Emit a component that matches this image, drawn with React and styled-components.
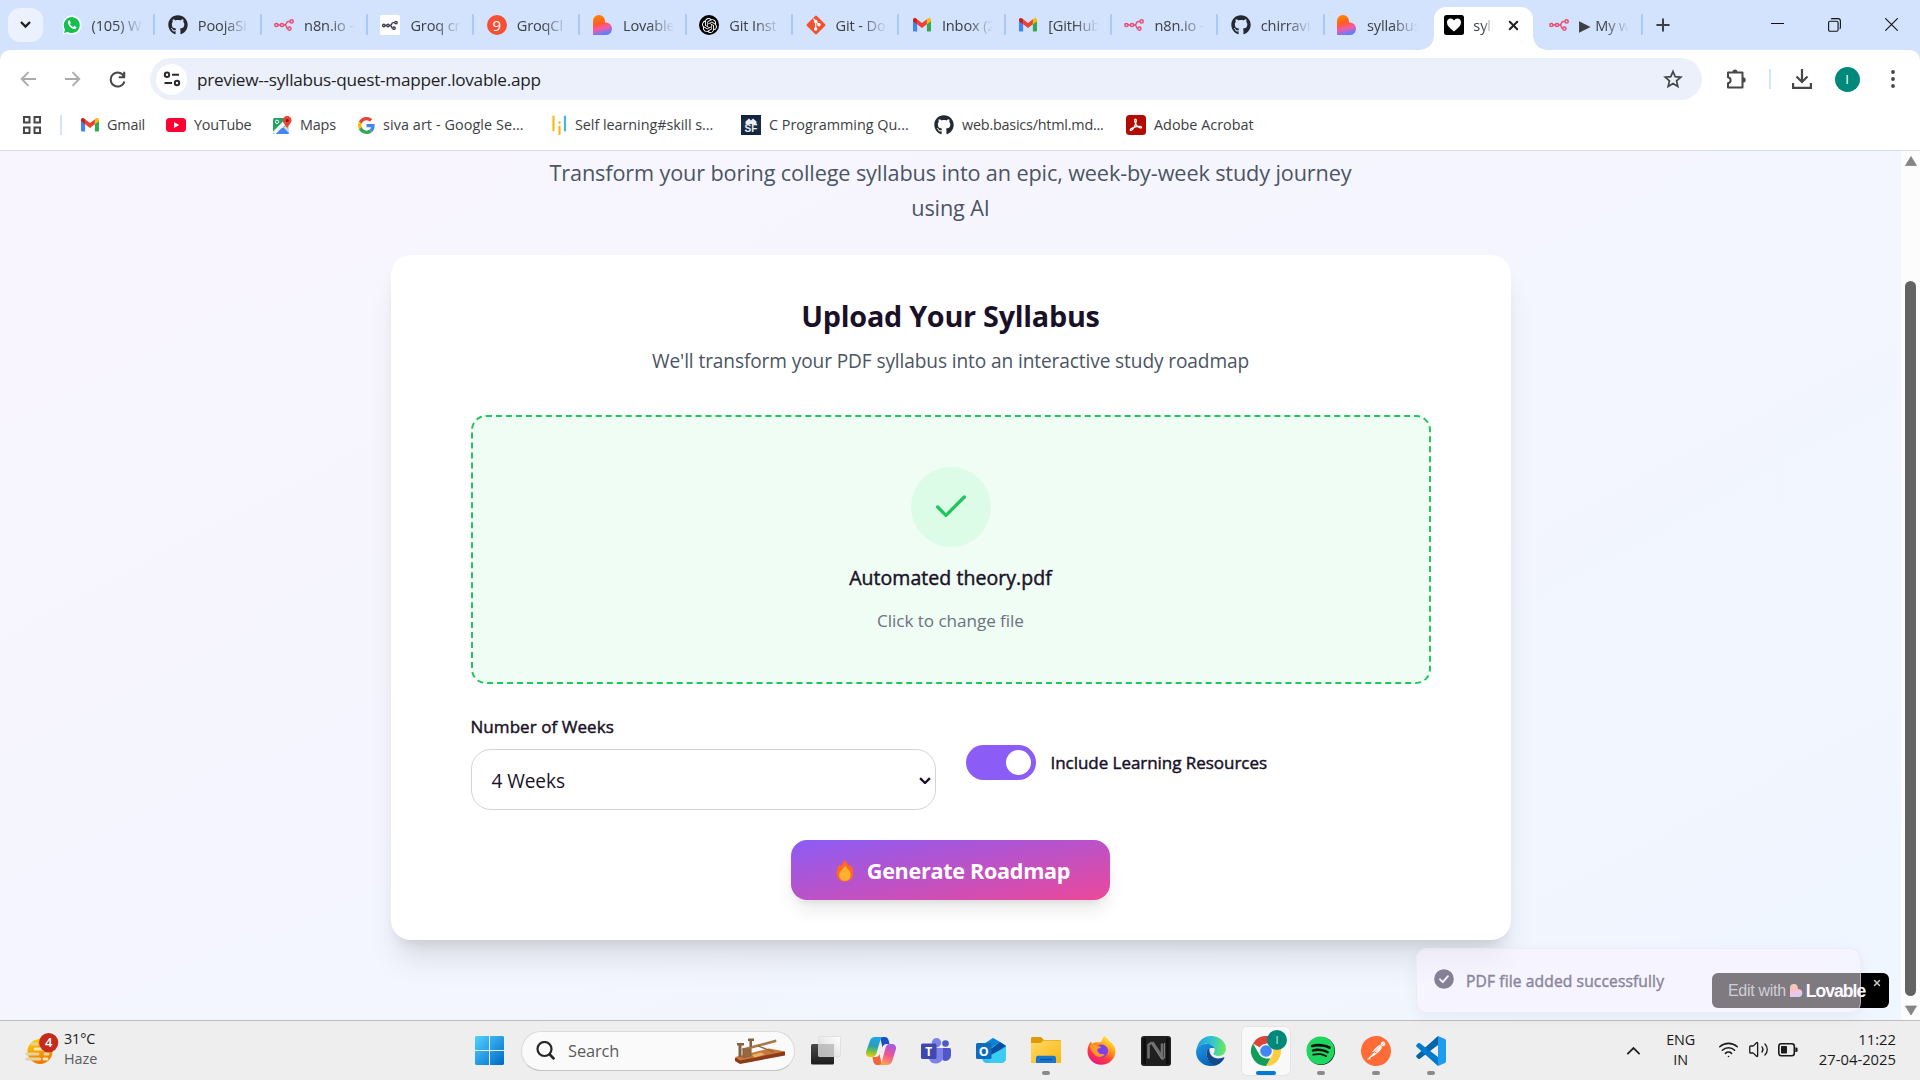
import React from "react";
import styled, { createGlobalStyle, css } from "styled-components";
import { Check, Plus, X, Wifi, Volume2 } from "lucide-react";
import { FaGithub, FaSpotify } from "react-icons/fa";
import { SiOpenai, SiPostman } from "react-icons/si";

const Global = createGlobalStyle`
  * { box-sizing: border-box; }
  body { margin: 0; overflow: hidden; font-family: "Open Sans", "Noto Sans", sans-serif; }
  svg { display: block; flex: none; }
`;

const Screen = styled.div`
  width: 1920px;
  height: 1080px;
  display: flex;
  flex-direction: column;
  overflow: hidden;
  background: #fff;
`;

/* ---------- tab strip ---------- */
const TabStrip = styled.div`
  height: 50px;
  flex: none;
  display: flex;
  align-items: flex-start;
  background: #d3e2fd;
`;
const TabSearch = styled.div`
  width: 35px;
  height: 34px;
  margin: 8px 6px 0 8px;
  border-radius: 12px;
  background: #ebf2fe;
  display: flex;
  align-items: center;
  justify-content: center;
  flex: none;
`;
const Tab = styled.div`
  position: relative;
  width: 106.3px;
  height: 50px;
  padding-left: 12.5px;
  display: flex;
  align-items: center;
  flex: none;
  &::after {
    content: "";
    display: ${(p) => (p.$sep ? "block" : "none")};
    position: absolute;
    right: 0;
    top: 14px;
    width: 2px;
    height: 21px;
    border-radius: 1px;
    background: #a8c7fa;
  }
`;
const ActiveTab = styled.div`
  position: relative;
  width: 98.25px;
  height: 43px;
  margin: 7px 4px 0 3.500px;
  padding: 0 12px 7px 10px;
  border-radius: 12px 12px 0 0;
  background: #fff;
  display: flex;
  align-items: center;
  flex: none;
  &::before,
  &::after {
    content: "";
    position: absolute;
    bottom: 0;
    width: 14px;
    height: 14px;
  }
  &::before {
    left: -14px;
    background: radial-gradient(circle at 0 0, transparent 13.5px, #fff 14px);
  }
  &::after {
    right: -14px;
    background: radial-gradient(circle at 100% 0, transparent 13.5px, #fff 14px);
  }
`;
const TabIcon = styled.div`
  width: 20px;
  height: 20px;
  display: flex;
  align-items: center;
  justify-content: center;
  flex: none;
`;
const TabText = styled.div`
  width: ${(p) => p.$w || 51}px;
  margin: 0 0 1px ${(p) => p.$ml || 10}px;
  white-space: nowrap;
  font-size: 14.6px;
  line-height: 22px;
  letter-spacing: ${(p) => p.$ls ?? -0.15}px;
  color: #3c4043;
  mask-image: linear-gradient(90deg, #000 50%, transparent 100%);
`;
const PlayMark = styled.span`
  font-family: "DejaVu Sans", sans-serif;
  font-size: 15px;
  line-height: 20px;
  margin-right: 5px;
`;
const Spacer = styled.div`
  flex: 1;
`;
const WindowControls = styled.div`
  display: flex;
  align-items: center;
  height: 49px;
  gap: 44px;
  padding-right: 22px;
`;
const NewTab = styled.div`
  height: 50px;
  padding-left: 10px;
  display: flex;
  align-items: center;
`;

/* ---------- toolbar ---------- */
const ToolbarBack = styled.div`
  background: #d3e2fd;
  flex: none;
`;
const Toolbar = styled.div`
  height: 50px;
  border-radius: 10px 10px 0 0;
  background: #fff;
  padding-top: 8px;
  display: flex;
  align-items: flex-start;
`;
const Slot = styled.div`
  width: ${(p) => p.$w}px;
  height: 42px;
  margin-right: ${(p) => p.$mr || 0}px;
  display: flex;
  align-items: center;
  justify-content: center;
  flex: none;
`;
const Omnibox = styled.div`
  width: 1552px;
  height: 42px;
  margin-left: 6px;
  border-radius: 21px;
  background: #ebf0fa;
  display: flex;
  align-items: center;
  padding: 0 19px 0 6px;
  flex: none;
`;
const SiteInfo = styled.div`
  width: 31px;
  height: 31px;
  border-radius: 50%;
  background: #fff;
  display: flex;
  align-items: center;
  justify-content: center;
`;
const Url = styled.div`
  margin: 1px 0 0 10px;
  font-size: 17.2px;
  line-height: 24px;
  letter-spacing: -0.26px;
  color: #1f1f1f;
`;
const VLine = styled.div`
  width: 2px;
  height: 20px;
  margin-top: ${(p) => p.$mt || 0}px;
  background: #d3e2fd;
  flex: none;
`;
const Avatar = styled.div`
  width: 25px;
  height: 25px;
  border-radius: 50%;
  background: #00897b;
  color: #fff;
  font: 13px/25px "Open Sans", sans-serif;
  text-align: center;
`;

/* ---------- bookmarks ---------- */
const Bookmarks = styled.div`
  height: 51px;
  flex: none;
  border-bottom: 1px solid #dcdfe0;
  display: flex;
  align-items: center;
  padding-left: 23px;
`;
const Bookmark = styled.div`
  width: ${(p) => p.$w}px;
  display: flex;
  align-items: center;
  gap: 8px;
  white-space: nowrap;
  font-size: 14.4px;
  letter-spacing: ${(p) => p.$ls}px;
  line-height: 20px;
  color: #3c4043;
  flex: none;
`;

/* ---------- page ---------- */
const Viewport = styled.div`
  height: 869px;
  flex: none;
  display: flex;
  position: relative;
`;
const Page = styled.main`
  width: 1901px;
  height: 869px;
  overflow: hidden;
  display: flex;
  flex-direction: column;
  align-items: center;
  background: linear-gradient(to bottom right, #faf5ff, #eff6ff) bottom / 100% 1010px no-repeat;
`;
const Tagline = styled.p`
  width: 840px;
  margin: 4px 0 30px;
  text-align: center;
  font-size: 21.7px;
  line-height: 35px;
  letter-spacing: -0.14px;
  color: #4b5563;
`;
const Card = styled.section`
  width: 1120px;
  height: 685px;
  flex: none;
  padding: 41px 80px 40px;
  border-radius: 20px;
  background: #fff;
  box-shadow: 0 25px 31px -6px rgba(0, 0, 0, 0.1), 0 10px 12.5px -7.5px rgba(0, 0, 0, 0.1);
  display: flex;
  flex-direction: column;
  align-items: center;
`;
const Title = styled.h2`
  margin: 0;
  font-size: 28.8px;
  font-weight: 700;
  line-height: 40px;
  letter-spacing: -0.27px;
  color: #1a1129;
`;
const Subtitle = styled.p`
  margin: 10px 0 0;
  font-size: 19.1px;
  line-height: 30px;
  letter-spacing: -0.11px;
  color: #4b5563;
`;
const DropZone = styled.div`
  width: 960px;
  height: 269px;
  flex: none;
  margin-top: 39px;
  border: 2px dashed #22c55e;
  border-radius: 15px;
  background: #f0fdf4;
  display: flex;
  flex-direction: column;
  align-items: center;
  padding-top: 50px;
`;
const CheckCircle = styled.div`
  width: 80px;
  height: 80px;
  border-radius: 50%;
  background: #dcfce7;
  color: #22c55e;
  display: flex;
  align-items: center;
  justify-content: center;
`;
const medium = css`
  -webkit-text-stroke: 0.45px currentColor;
`;
const FileName = styled.div`
  margin-top: 16px;
  font-size: 19.5px;
  line-height: 30px;
  letter-spacing: 0.05px;
  color: #1a1129;
  ${medium}
`;
const FileHint = styled.div`
  margin-top: 15px;
  font-size: 17.1px;
  line-height: 26px;
  letter-spacing: -0.05px;
  color: #6b7280;
`;
const Options = styled.div`
  width: 960px;
  margin-top: 30px;
  display: grid;
  grid-template-columns: 465px 465px;
  gap: 30px;
`;
const Label = styled.div`
  font-size: 17px;
  line-height: 25px;
  letter-spacing: ${(p) => p.$ls ?? 0.06}px;
  white-space: nowrap;
  color: #1a1129;
  ${medium}
`;
const SelectBox = styled.div`
  height: 61px;
  margin-top: 10px;
  padding: 2px 4px 0 20px;
  border: 1px solid #d1d5db;
  border-radius: 20px;
  display: flex;
  align-items: center;
  justify-content: space-between;
  font-size: 19.1px;
  letter-spacing: -0.1px;
  color: #1a1129;
`;
const ToggleRow = styled.div`
  height: 35px;
  margin-top: 31px;
  display: flex;
  align-items: center;
  gap: 15px;
`;
const Toggle = styled.div`
  width: 70px;
  height: 35px;
  padding: 5px;
  border-radius: 18px;
  background: #8b5cf6;
  display: flex;
  justify-content: flex-end;
  &::after {
    content: "";
    width: 25px;
    height: 25px;
    border-radius: 50%;
    background: #fff;
  }
`;
const Generate = styled.button`
  width: 319px;
  height: 60px;
  flex: none;
  margin-top: 30px;
  padding: 1px 0 0 5px;
  border: 0;
  border-radius: 16px;
  background: linear-gradient(to bottom right, #8b5cf6, #ec4899);
  box-shadow: 0 12px 19px -4px rgba(0, 0, 0, 0.1), 0 5px 8px -5px rgba(0, 0, 0, 0.1);
  display: flex;
  align-items: center;
  justify-content: center;
  gap: 13px;
  color: #fff;
  font: 700 21.6px/30px "Open Sans", sans-serif;
  letter-spacing: -0.3px;
`;
const Scrollbar = styled.div`
  width: 19px;
  height: 869px;
  background: #fcfcfc;
  display: flex;
  flex-direction: column;
  align-items: center;
  padding: 5px 0 5px;
`;
const Thumb = styled.div`
  width: 11px;
  height: 715px;
  margin: 115px 0 9px;
  border-radius: 6px;
  background: #636363;
`;
const Badge = styled.div`
  position: absolute;
  left: 1712px;
  top: 822px;
  width: 177px;
  height: 35px;
  border-radius: 6px;
  background: #000;
  color: #fff;
  display: flex;
  align-items: center;
  padding-left: 16px;
  font: 16px/20px "Liberation Sans", sans-serif;
`;
const BadgeText = styled.span`
  color: #a9a9ad;
  margin-right: 4px;
  letter-spacing: -0.3px;
  white-space: nowrap;
`;
const BadgeBrand = styled.b`
  font-size: 17.5px;
  letter-spacing: -0.95px;
  margin-left: 3px;
`;
const BadgeClose = styled.div`
  position: absolute;
  right: 7px;
  top: 5px;
  color: #c9c9c9;
`;
const Toast = styled.div`
  position: absolute;
  left: 1416px;
  top: 797px;
  width: 445px;
  height: 65px;
  border-radius: 10px;
  border: 1px solid rgba(226, 226, 245, 0.5);
  background: rgba(251, 244, 255, 0.5);
  box-shadow: 0 5px 15px rgba(0, 0, 0, 0.05);
  display: flex;
  align-items: center;
  padding-left: 17px;
  gap: 12px;
  font-size: 15.600px;
  letter-spacing: 0.12px;
  color: #8a869b;
  ${medium}
`;
const ToastIcon = styled.div`
  margin-bottom: 3px;
`;

/* ---------- taskbar ---------- */
const Taskbar = styled.div`
  height: 60px;
  flex: none;
  border-top: 1px solid #bdbdbd;
  background: #eee;
  display: flex;
  align-items: center;
`;
const Weather = styled.div`
  width: 475px;
  padding-left: 24px;
  display: flex;
  align-items: center;
  gap: 5px;
`;
const TwoLines = styled.div`
  margin-bottom: ${(p) => p.$mb ?? 2}px;
  font-size: ${(p) => p.$size || 14.4}px;
  line-height: 20px;
  letter-spacing: ${(p) => p.$ls ?? -0.15}px;
  text-align: ${(p) => p.$align || "left"};
  color: #1b1b1b;
  & > span {
    color: #5c5c5c;
    letter-spacing: 0;
  }
`;
const SearchBox = styled.div`
  width: 274px;
  height: 40px;
  margin: 0 4px 0 17px;
  border: 1px solid #dadada;
  border-bottom-color: #c4c4c4;
  border-radius: 20px;
  background: #fafafa;
  display: flex;
  align-items: center;
  padding: 0 8px 0 14px;
  font-size: 16.4px;
  color: #5a5a5a;
`;
const SearchLabel = styled.span`
  flex: 1;
  margin-left: 13px;
  letter-spacing: -0.1px;
`;
const App55 = styled.div`
  position: relative;
  width: 48px;
  height: 48px;
  margin: 0 3.48px;
  border-radius: 5px;
  display: flex;
  align-items: center;
  justify-content: center;
  flex: none;
  ${(p) =>
    p.$active &&
    css`
      background: #f9f9f9;
      box-shadow: 0 0 0 1px #e4e4e4;
    `}
  &::after {
    content: "";
    display: ${(p) => (p.$run || p.$active ? "block" : "none")};
    position: absolute;
    bottom: 0;
    width: ${(p) => (p.$active ? 20 : 8)}px;
    height: 4px;
    border-radius: 2px;
    background: ${(p) => (p.$active ? "#0078d4" : "#8a8a8a")};
  }
`;
const AppBadge = styled.div`
  position: absolute;
  left: 25px;
  top: 3px;
  width: 20px;
  height: 20px;
  border-radius: 50%;
  background: #00897b;
  color: #cfe9e6;
  font: 11px/20px "Open Sans", sans-serif;
  text-align: center;
`;
const Tray = styled.div`
  margin-left: auto;
  padding-right: 24px;
  display: flex;
  align-items: center;
  color: #1b1b1b;
`;
const TrayIcons = styled.div`
  display: flex;
  align-items: center;
  gap: 9px;
  margin: 0 0 2px 23px;
`;
const Clock = styled.div`
  width: 98px;
`;

/* ---------- drawings ---------- */
const N8n = ({ color = "#ea4b71" }) => (
  <svg width="20" height="12" viewBox="0 0 20 12" fill="none" stroke={color} strokeWidth="1.5">
    <circle cx="2.4" cy="6" r="1.6" />
    <circle cx="8" cy="6" r="1.6" />
    <path d="M4 6h2.4M9.6 6h1c2.4 0 1.2-3.6 3.6-3.6h1.6M10.6 6c2.4 0 1.2 3.6 3.2 3.6" />
    <circle cx="17.6" cy="2.4" r="1.6" />
    <circle cx="15.4" cy="9.6" r="1.6" />
  </svg>
);
const N8nBoxed = () => (
  <svg width="20" height="20" viewBox="0 0 20 20">
    <rect width="20" height="20" rx="1.5" fill="#fff" />
    <g fill="none" stroke="#3f3d56" strokeWidth="1.4">
      <circle cx="3.800" cy="10.500" r="1.2" />
      <circle cx="8" cy="10.500" r="1.2" />
      <path d="M5 10.500h1.800M9.200 10.500h.8c2.400 0 1-2.900 3.200-2.900h1.400M10 10.500c2.400 0 1 2.700 2.600 2.700" />
      <circle cx="16" cy="7.600" r="1.2" />
      <circle cx="14" cy="13.200" r="1.2" />
    </g>
  </svg>
);
const Lovable = ({ size = 20, id = "lv", soft }) => (
  <svg width={size} height={size} viewBox="0 0 20 20" opacity={soft ? 0.95 : 1}>
    <defs>
      <linearGradient id={id} x1="0.35" y1="0" x2="0.6" y2="1">
        <stop offset="0.1" stopColor={soft ? "#ffab7a" : "#ff7a00"} />
        <stop offset="0.42" stopColor={soft ? "#ff9c8a" : "#ff5a35"} />
        <stop offset="0.66" stopColor={soft ? "#f5a0cc" : "#f25aa8"} />
        <stop offset="0.95" stopColor={soft ? "#a9b6ff" : "#5f7dff"} />
      </linearGradient>
    </defs>
    <path d="M0 6a6 6 0 0 1 12 0v1.500h1.500a6.300 6.300 0 0 1 0 12.500H0z" fill={`url(#${id})`} />
  </svg>
);
const Gmail = ({ s = 18 }) => (
  <svg width={s} height={s * 0.76} viewBox="0 0 24 18">
    <path d="M0 3v13.400C0 17.300.7 18 1.600 18h3.900V7.600z" fill="#4285f4" />
    <path d="M18.500 18h3.900c.9 0 1.600-.7 1.600-1.600V3l-5.500 4.600z" fill="#34a853" />
    <path d="M18.500 1.600v6.700L24 4.200V2.400C24 .2 21.500-.9 19.800.4z" fill="#fbbc04" />
    <path d="M5.500 8.300V1.600L12 6.500l6.500-4.900v6.700L12 13.200z" fill="#ea4335" />
    <path d="M0 2.400v1.800l5.500 4.100V1.600L4.200.4C2.500-.9 0 .2 0 2.400z" fill="#c5221f" />
  </svg>
);
const GitLogo = () => (
  <svg width="20" height="20" viewBox="0 0 20 20">
    <rect x="3" y="3" width="14" height="14" rx="1.300" transform="rotate(45 10 10)" fill="#f4502f" />
    <g stroke="#fff" strokeWidth="1.300" fill="#fff">
      <path d="M7.300 3.600 13 9.600M9.700 6v8" fill="none" />
      <circle cx="9.700" cy="6.500" r="1.100" />
      <circle cx="9.700" cy="14" r="1.100" />
      <circle cx="13" cy="9.800" r="1.100" />
    </g>
  </svg>
);
const WhatsApp = () => (
  <svg width="20" height="20" viewBox="0 0 20 20">
    <path d="M.5 19.500 1.800 14.700A9.500 9.500 0 1 1 5.300 18.200z" fill="#fff" />
    <path d="M2 18 3 14.400A8 8 0 1 1 5.700 17z" fill="#12c14b" />
    <path d="M6.900 5.600c-.9.500-1.300 1.600-.9 2.900.7 2.500 3 4.800 5.500 5.500 1.500.4 2.600-.2 2.900-1.400l.1-.7-2.200-1.100-1 1.200c-1.500-.6-2.700-1.700-3.300-3.100l.8-1-.9-2.300z" fill="#fff" />
  </svg>
);
const GroqNine = styled.div`
  width: 20px;
  height: 20px;
  border-radius: 50%;
  background: #f55036;
  color: #fff;
  font: 15px/20px "Open Sans", sans-serif;
  text-align: center;
`;
const ChatGpt = styled.div`
  width: 20px;
  height: 20px;
  border-radius: 50%;
  background: #000;
  color: #fff;
  display: flex;
  align-items: center;
  justify-content: center;
`;
const HeartIcon = () => (
  <svg width="20" height="20" viewBox="0 0 20 20">
    <rect width="20" height="20" rx="2.500" fill="#000" />
    <path d="M10 16.500C5 12.500 3 10.300 3 7.300 3 5 4.600 3.500 6.600 3.500c1.400 0 2.600.7 3.400 2 .8-1.300 2-2 3.400-2 2 0 3.600 1.500 3.600 3.800 0 3-2 5.200-7 9.200z" fill="#fff" />
  </svg>
);
const YouTube = () => (
  <svg width="20" height="14" viewBox="0 0 20 14">
    <rect width="20" height="14" rx="3.500" fill="#ff0033" />
    <path d="M8 4l5.200 3L8 10z" fill="#fff" />
  </svg>
);
const Maps = () => (
  <svg width="19" height="19" viewBox="0 0 19 19">
    <rect y="2" width="16" height="16" rx="1.500" fill="#1fa463" />
    <path d="M0 17 8 9l8 8-1 1H1z" fill="#4285f4" />
    <path d="M0 15.500 10 5.500l3 3L3 18H1.500L0 17z" fill="#f3f3f3" />
    <path d="M3 18 8.500 12.200 14 18z" fill="#4285f4" />
    <path d="M16 9v8l-6-6z" fill="#d5d8dc" />
    <circle cx="4" cy="5.800" r="1.700" fill="none" stroke="#fff" strokeWidth="1" />
    <path d="M14.200 0a4.300 4.300 0 0 1 4.300 4.400c0 3.200-3.400 4.200-4.300 8.400-.9-4.200-4.300-5.200-4.300-8.400A4.300 4.300 0 0 1 14.200 0z" fill="#ea4335" />
    <circle cx="14.200" cy="4.400" r="1.500" fill="#811411" />
  </svg>
);
const Google = () => (
  <svg width="17" height="17" viewBox="0 0 48 48">
    <path fill="#EA4335" d="M24 9.500c3.540 0 6.710 1.220 9.210 3.600l6.850-6.850C35.900 2.380 30.470 0 24 0 14.620 0 6.510 5.380 2.560 13.220l7.980 6.190C12.430 13.720 17.740 9.500 24 9.500z" />
    <path fill="#4285F4" d="M46.980 24.550c0-1.570-.15-3.090-.38-4.550H24v9.020h12.940c-.58 2.960-2.260 5.480-4.780 7.180l7.730 6c4.510-4.180 7.090-10.360 7.090-17.650z" />
    <path fill="#FBBC05" d="M10.530 28.590c-.48-1.450-.76-2.990-.76-4.590s.27-3.140.76-4.590l-7.980-6.190C.92 16.460 0 20.120 0 24c0 3.880.92 7.540 2.560 10.780l7.970-6.190z" />
    <path fill="#34A853" d="M24 48c6.480 0 11.930-2.130 15.890-5.810l-7.730-6c-2.150 1.450-4.920 2.300-8.160 2.300-6.260 0-11.570-4.220-13.470-9.910l-7.980 6.190C6.510 42.620 14.620 48 24 48z" />
  </svg>
);
const SelfLearn = () => (
  <svg width="15" height="20" viewBox="0 0 15 20" strokeWidth="2.200" strokeLinecap="round">
    <path d="M1.500 1.500v14M7.500 11.500v7.500" stroke="#fbb917" />
    <path d="M13 1.500v14" stroke="#4ab5e8" />
    <circle cx="7.500" cy="7.500" r="1.200" fill="#fbb917" />
  </svg>
);
const SfBox = styled.div`
  width: 20px;
  height: 20px;
  background: linear-gradient(#0f2238, #1d3048 45%, #10243c);
  color: #e8eef5;
  font: 700 10px/10px "Liberation Sans", sans-serif;
  letter-spacing: 0;
  text-align: center;
`;
const Sf = () => (
  <SfBox>
    <svg width="20" height="9" viewBox="0 0 20 9">
      <path d="M4.500 9V6.500L8 3.500l2 2 2-2 3.500 3V9z" fill="#e8eef5" />
    </svg>
    SF
  </SfBox>
);
const AcrobatBox = styled.div`
  width: 20px;
  height: 20px;
  border-radius: 3.500px;
  background: #b30b00;
  display: flex;
  align-items: center;
  justify-content: center;
`;
const Acrobat = () => (
  <AcrobatBox>
    <svg width="14" height="14" viewBox="0 0 14 14" fill="none" stroke="#fff" strokeWidth="1.200">
      <path d="M6.300 1c1.500 0 1.200 3-.2 6C4.800 10 2.800 12.800 1.500 12.500c-1.400-.6 1.200-3 5-3.700 3.400-.7 6.500-.5 6 .8-.6 1.100-3.700-.4-5.300-2.800C5.500 4.300 5.100 1.200 6.300 1z" />
    </svg>
  </AcrobatBox>
);
const AppsGrid = () => (
  <svg width="18" height="18" viewBox="0 0 18 18" fill="none" stroke="#474747" strokeWidth="2">
    <rect x="1" y="1" width="5.500" height="5.500" />
    <rect x="11.500" y="1" width="5.500" height="5.500" />
    <rect x="1" y="11.500" width="5.500" height="5.500" />
    <rect x="11.500" y="11.500" width="5.500" height="5.500" />
  </svg>
);
const Arrow = ({ flip }) => (
  <svg width="16" height="16" viewBox="0 0 16 16" fill="none" stroke="#a9abad" strokeWidth="1.900">
    <path d={flip ? "M0 8h14M7.500 1.200 14.300 8l-6.800 6.800" : "M16 8H2M8.500 1.200 1.700 8l6.800 6.800"} />
  </svg>
);
const Reload = () => (
  <svg width="17" height="17" viewBox="0 0 17 17" fill="none" stroke="#444746" strokeWidth="2">
    <path d="M15 5.500A7 7 0 1 0 15.400 10.500M15.200.8v5.500H9.700" />
  </svg>
);
const Tune = () => (
  <svg width="18" height="16" viewBox="0 0 18 16" fill="none" stroke="#2b2b2b" strokeWidth="2">
    <circle cx="4" cy="3.800" r="2.200" />
    <path d="M9 3.800h7M1.500 12H9" />
    <circle cx="14" cy="12" r="2.200" />
  </svg>
);
const StarIcon = () => (
  <svg width="20" height="20" viewBox="0 0 20 20" fill="none" stroke="#444746" strokeWidth="1.700">
    <path d="M10 2.500l2.200 5.200 5.600.5-4.250 3.700 1.270 5.500L10 14.500l-4.820 2.900 1.270-5.500L2.200 8.200l5.600-.5z" />
  </svg>
);
const Puzzle = () => (
  <svg width="22" height="22" viewBox="0 0 22 22">
    <path d="M3 4.500h14.500v15H3v-4.300c3.500-.5 3.500-5.400 0-6z" fill="none" stroke="#474747" strokeWidth="2" strokeLinejoin="round" />
    <path d="M7.500 4.200a2.500 2.700 0 0 1 5 0zM18 9.300a2.700 2.600 0 0 1 0 5.200z" fill="#474747" />
  </svg>
);
const Download = () => (
  <svg width="20" height="20" viewBox="0 0 20 20" fill="none" stroke="#474747" strokeWidth="2.200">
    <path d="M10 0v12.500M4.500 7.500l5.500 5.500 5.500-5.500M1.100 14v4.800h17.800V14" />
  </svg>
);
const Dots = () => (
  <svg width="4" height="18" viewBox="0 0 4 18" fill="#474747">
    <circle cx="2" cy="2" r="1.900" />
    <circle cx="2" cy="9" r="1.900" />
    <circle cx="2" cy="16" r="1.900" />
  </svg>
);
const SmallChevron = ({ w = 11, color = "#1f1f1f", up, sw = 2.300 }) => (
  <svg width={w} height={w * 0.64} viewBox="0 0 11 7" fill="none" stroke={color} strokeWidth={sw}>
    <path d={up ? "M1 6l4.500-4.500L10 6" : "M1 1l4.500 4.500L10 1"} />
  </svg>
);
const Fire = () => (
  <svg width="18" height="23" viewBox="0 0 18 23">
    <path d="M9 .4c.8 2.500 2.400 3.800 4.200 6.400.4-.5.600-1 .7-1.600C16.200 8 17.300 11 17.300 14.200 17.300 19.300 13.800 22.600 9 22.600S.6 19.300.6 14.400C.6 11 2 8.500 3 5.600c.7.500 1 1 1.200 1.800C6.200 5.300 7.600 3 9 .4z" fill="#ff6723" />
    <path d="M9.200 6.500c2 3 5.400 5.300 5.400 9.400 0 3.500-2.300 5.900-5.600 5.900s-5.700-2.300-5.700-5.800c0-4 4-5.800 5.900-9.500z" fill="#ffb02e" />
  </svg>
);
const ToastCheck = () => (
  <svg width="20" height="20" viewBox="0 0 20 20">
    <circle cx="10" cy="10" r="9.800" fill="#858095" />
    <path d="M6 10.300l2.800 2.900L14 7.200" fill="none" stroke="#f4f2fd" strokeWidth="1.900" strokeLinecap="round" strokeLinejoin="round" />
  </svg>
);
const Triangle = ({ down }) => (
  <svg width="12" height="10" viewBox="0 0 12 10">
    <path d={down ? "M.5 1h11L6 10z" : "M.5 9.500h11L6 .5z"} fill="#858585" stroke="#858585" strokeLinejoin="round" strokeWidth=".8" />
  </svg>
);
const WeatherIcon = () => (
  <svg width="35" height="36" viewBox="0 0 35 36">
    <defs>
      <linearGradient id="sun" x1="0" y1="0" x2="0.300" y2="1">
        <stop offset="0" stopColor="#fcd600" />
        <stop offset="1" stopColor="#f07800" />
      </linearGradient>
    </defs>
    <circle cx="16" cy="18.500" r="12.500" fill="url(#sun)" />
    <g stroke="#e3d3a0" strokeWidth="3" strokeLinecap="round">
      <path d="M8 11h5M3 21h11M2.800 26h13M21 21h3" />
      <path d="M11 16h9M20 26h3" stroke="#fbe8ad" />
    </g>
    <circle cx="24.700" cy="9.800" r="9.600" fill="#c42b1c" transform="translate(0 -.2)" />
    <text x="24.700" y="14.200" fill="#fff" fontFamily="Open Sans, sans-serif" fontSize="13" fontWeight="600" textAnchor="middle">4</text>
  </svg>
);
const WinLogo = () => (
  <svg width="29" height="29" viewBox="0 0 29 29">
    <defs>
      <linearGradient id="win" x1="0" y1="0" x2="1" y2="1">
        <stop offset="0" stopColor="#4fd3ff" />
        <stop offset="1" stopColor="#0067c7" />
      </linearGradient>
    </defs>
    <path d="M1 0h13v14H0V1zM15 0h13l1 1v13H15zM0 15h14v14H1l-1-1zM15 15h14v13l-1 1H15z" fill="url(#win)" />
  </svg>
);
const SearchGlass = () => (
  <svg width="19" height="19" viewBox="0 0 19 19" fill="none" stroke="#262626" strokeWidth="2.200">
    <circle cx="8.500" cy="8" r="7" />
    <path d="M13.300 13l5 5.200" strokeWidth="2.600" />
  </svg>
);
const Telegraph = () => (
  <svg width="52" height="28" viewBox="0 0 52 28">
    <path d="M1 21l36-8 14 1.500v4L6 27l-5-3z" fill="#8c3a17" />
    <path d="M1 20l34-8.500 16 3L6 23.500z" fill="#c9773f" />
    <path d="M18 18l9-2.500 4 2-10 3z" fill="#e3b468" />
    <path d="M8 11.500 42 2.500l.5 2.500L9 14z" fill="#a9784a" />
    <path d="M3 6h7v2.500H7.500V20h-3V8.500H3zM14 1.500h6V4h-2v6h-2.500V4H14z" fill="#84603f" />
    <path d="M9 12h8v7l-8 1.500zM24 9l16 6" fill="#95683e" stroke="#8c643e" strokeWidth="1.200" />
  </svg>
);
const TaskView = () => (
  <svg width="30" height="29" viewBox="0 0 30 29">
    <defs>
      <linearGradient id="tvd" x1="0" y1="0" x2="0" y2="1">
        <stop offset="0" stopColor="#4a4a4a" />
        <stop offset="1" stopColor="#1c1c1c" />
      </linearGradient>
      <linearGradient id="tvl" x1="1" y1="0" x2="0" y2="1">
        <stop offset="0" stopColor="#fff" />
        <stop offset="1" stopColor="#d6d6d6" />
      </linearGradient>
    </defs>
    <rect x="0" y="8" width="23" height="20.500" rx="1.500" fill="url(#tvd)" />
    <rect x="7.500" y=".5" width="22" height="20" rx="1" fill="url(#tvl)" stroke="#dcdcdc" strokeWidth=".8" />
    <path d="M7.500 8H23v12.500H7.500z" fill="#aaa" opacity=".65" />
  </svg>
);
const Copilot = () => (
  <svg width="30" height="28" viewBox="0 0 30 28">
    <defs>
      <linearGradient id="cpa" x1="0.400" y1="0" x2="0.300" y2="1">
        <stop offset="0" stopColor="#1ba7ee" />
        <stop offset="0.450" stopColor="#2c9fb3" />
        <stop offset="0.700" stopColor="#6cc04a" />
        <stop offset="1" stopColor="#f3c80d" />
      </linearGradient>
      <linearGradient id="cpb" x1="0.700" y1="0" x2="0.300" y2="1">
        <stop offset="0" stopColor="#a558ec" />
        <stop offset="0.500" stopColor="#ee5590" />
        <stop offset="1" stopColor="#ffa84f" />
      </linearGradient>
    </defs>
    <path d="M14 0h5c2 0 3 1.500 3.600 3.300L23.500 7h-3c-2.500 0-3.300 1.500-4 3.500z" fill="#1b4fc4" />
    <path d="M16 28h-5c-2 0-3-1.500-3.600-3.300L6.500 20h3c2.500 0 3.300-1 4-3z" fill="#f0663c" />
    <path d="M9 0h8.500c-2 0-2.800 1.800-3.300 3.500L10.500 16c-.7 2.500-2 4-4.500 4H4c-3.500 0-4.700-3-3.700-6L4 3.500C4.800 1.200 6.500 0 9 0z" fill="url(#cpa)" />
    <path d="M21 28h-8.500c2 0 2.800-1.800 3.300-3.500L19.500 11c.7-2.500 2-4 4.500-4h2c3.500 0 4.700 3 3.700 6L26 24.500c-.8 2.300-2.500 3.500-5 3.500z" fill="url(#cpb)" />
  </svg>
);
const Teams = () => (
  <svg width="30" height="28" viewBox="0 0 30 28">
    <circle cx="24.500" cy="6.500" r="3.300" fill="#4f58c4" />
    <path d="M20 11h8.500a1.500 1.500 0 0 1 1.500 1.500v6a5.500 5.500 0 0 1-8.500 4.600z" fill="#4f58c4" />
    <circle cx="15.500" cy="5.700" r="4.700" fill="#7b83eb" />
    <path d="M8 11h14v9a7.300 7.300 0 0 1-14 2z" fill="#7b83eb" />
    <rect x="0" y="6.500" width="15.500" height="15.500" rx="1.500" fill="#4048b0" />
    <text x="7.700" y="18.800" fill="#fff" fontFamily="Open Sans, sans-serif" fontSize="12" fontWeight="700" textAnchor="middle">T</text>
  </svg>
);
const Outlook = () => (
  <svg width="31" height="28" viewBox="0 0 31 28">
    <path d="M5 9 17 1l13 7.500V20c0 4-2 6-5.500 6H12c-4 0-6-2-6-6z" fill="#33c0ee" />
    <path d="M5 9 17 1l7 4L8 15z" fill="#0a84d8" />
    <path d="M12 14 24 5l6 4-16 11z" fill="#0b4fa5" />
    <path d="M11 20 30 10v10c0 4-2 6-5.500 6H14z" fill="#39cdf4" />
    <rect x="0" y="6" width="15.500" height="16" rx="1.500" fill="#0f6cbd" />
    <text x="7.800" y="18.500" fill="#fff" fontFamily="Open Sans, sans-serif" fontSize="12.500" fontWeight="700" textAnchor="middle">O</text>
  </svg>
);
const Folder = () => (
  <svg width="30" height="27" viewBox="0 0 30 27">
    <defs>
      <linearGradient id="fld" x1="0" y1="0" x2="1" y2="1">
        <stop offset="0" stopColor="#ffd965" />
        <stop offset="1" stopColor="#f9b812" />
      </linearGradient>
    </defs>
    <path d="M0 1.500C0 .6.600 0 1.500 0H10l3 3h15.500c1 0 1.500.6 1.500 1.500V10H0z" fill="#dc9a05" />
    <path d="M0 6h9.500l3-2.500H30V26H0z" fill="url(#fld)" />
    <path d="M5 26v-5c0-1.300 1-2.200 2.200-2.200h15.600c1.200 0 2.200 1 2.200 2.200v5z" fill="#1677cf" />
    <path d="M9 22.500h12" stroke="#0c539a" strokeWidth="1.300" />
  </svg>
);
const Firefox = () => (
  <svg width="29" height="29" viewBox="0 0 29 29">
    <defs>
      <linearGradient id="ff" x1="0.850" y1="0" x2="0.250" y2="1">
        <stop offset="0.050" stopColor="#fff44f" />
        <stop offset="0.400" stopColor="#ff980e" />
        <stop offset="0.700" stopColor="#ff3647" />
        <stop offset="1" stopColor="#e31587" />
      </linearGradient>
    </defs>
    <path d="M17.500 0c4 2.500 4.500 5 5 6.500 0-1 0-1.500-.2-2C26.500 8 28.500 12 28.500 15.500 28 23.500 22 28.700 14.300 28.700S.5 23 .5 15c0-4 1.500-7.500 3.500-9.500L5 8c1.500-1.500 3.500-2 6-1.700 2 0 3-.3 3.500-1C15 3.500 16 1.500 17.500 0z" fill="url(#ff)" />
    <circle cx="14.500" cy="15" r="6.500" fill="#7a3ff0" />
    <path d="M3 9c3-1 5 0 7 .5 2.500.3 4 1.500 4 2.500-3 0-4 1-3.500 3 .5 2.500 4 4 7.500 3-2 3.500-8 4-11 0C4.500 15.500 3 12.500 3 9z" fill="#ff9a2a" />
  </svg>
);
const Notion = () => (
  <svg width="30" height="30" viewBox="0 0 30 30">
    <rect width="30" height="30" rx="3" fill="#1f1f1f" />
    <path d="M3.500 2v26M26.500 2v26" stroke="#0c0c0c" strokeWidth="2.500" />
    <path d="M7.500 22.500V9l2.500-2h2l9 13.500V7.500" fill="none" stroke="#6e6e6e" strokeWidth="2.600" />
    <path d="M11 8l9.500 14.500h2l1-1.500V7" fill="none" stroke="#7d7d7d" strokeWidth="1.300" />
  </svg>
);
const Edge = () => (
  <svg width="30" height="30" viewBox="0 0 30 30">
    <defs>
      <linearGradient id="ed1" x1="0" y1="0.300" x2="1" y2="0.400">
        <stop offset="0" stopColor="#229fe0" />
        <stop offset="0.500" stopColor="#30c3d2" />
        <stop offset="1" stopColor="#6bea5c" />
      </linearGradient>
      <linearGradient id="ed2" x1="0" y1="0" x2="0.600" y2="1">
        <stop offset="0" stopColor="#1c9be6" />
        <stop offset="1" stopColor="#0a61b5" />
      </linearGradient>
    </defs>
    <path d="M.5 14C1.500 5.500 7.500 0 15 0c8.500 0 15 6 15 12.500 0 4.500-3.200 7.500-7.500 7.500-3 0-5-1.200-5-2.500 0-.8 1.200-1.500 1.200-3.500 0-3.500-3.200-6.300-8-6.300C5.500 7.700 2 10 .5 14z" fill="url(#ed1)" />
    <path d="M0 15.500C.5 11 5 7.800 10.500 7.800c4 0 7 2 8 4.500-5-1.500-8 1.300-8 5.200 0 5.500 3.500 10 9 12C9 32 0 25.500 0 15.500z" fill="url(#ed2)" />
    <path d="M10.500 17.500c0-3 1.500-4.700 3-5.300-.8 4.300 2 10.300 9 10.300 2.500 0 4-.7 5-1.200.8-.3 1.200.2.8.8C26.500 26 22.500 29 19.500 29.600c-5-.6-9-6.300-9-12.100z" fill="#114a8b" />
  </svg>
);
const Chrome = () => (
  <svg width="30" height="30" viewBox="0 0 30 30">
    <path d="M15 15 2 7.500A15 15 0 0 1 28 7.500H15z" fill="#db4437" />
    <path d="M15 7.500h13A15 15 0 0 1 15 30l6.500-11.250z" fill="#ffcd40" />
    <path d="M2 7.500l6.500 11.250L15 22.500h4.300L15 30A15 15 0 0 1 2 7.500z" fill="#0f9d58" />
    <circle cx="15" cy="15" r="7.300" fill="#f1f1f1" />
    <circle cx="15" cy="15" r="5.800" fill="#4285f4" />
  </svg>
);
const Disc = styled.div`
  width: 28px;
  height: 28px;
  border-radius: 50%;
  background: #111;
  color: #1ed760;
  display: flex;
  align-items: center;
  justify-content: center;
`;
const PostmanDisc = styled(Disc)`
  width: 29px;
  height: 29px;
  background: #fff;
  color: #ff6c37;
`;
const VsCode = () => (
  <svg width="30" height="30" viewBox="0 0 30 30">
    <path d="M22 0 .6 19.200c-.6.600-.6 1.400 0 2l1.600 1.500c.5.500 1.200.5 1.700.1L22 9z" fill="#0065a9" />
    <path d="M22 30 .6 10.800c-.6-.6-.6-1.400 0-2l1.600-1.500c.5-.5 1.200-.5 1.700-.1L22 21z" fill="#007acc" />
    <path d="M22 0l7 3c.6.300 1 1 1 1.700v20.600c0 .8-.4 1.400-1 1.700l-7 3z" fill="#1f9cf0" />
  </svg>
);
const Battery = () => (
  <svg width="20" height="14" viewBox="0 0 20 14">
    <rect x=".8" y=".8" width="15.500" height="12" rx="2.500" fill="none" stroke="#1b1b1b" strokeWidth="1.600" />
    <rect x="3" y="3" width="6" height="7.600" rx=".8" fill="#1b1b1b" />
    <path d="M17.300 4.500h1a1.300 1.300 0 0 1 1.300 1.300v2a1.300 1.300 0 0 1-1.300 1.300h-1z" fill="#1b1b1b" />
  </svg>
);
const Minimize = () => (
  <svg width="13" height="13" viewBox="0 0 13 13" stroke="#111">
    <path d="M0 5.500h13" />
  </svg>
);
const Restore = () => (
  <svg width="13" height="14" viewBox="0 0 13 14" fill="none" stroke="#111" strokeWidth="1.100">
    <rect x=".6" y="3.200" width="9.500" height="10" rx="1.500" />
    <path d="M3 1.200C3.300.8 3.800.6 4.500.6H10c1.500 0 2.400 1 2.400 2.400v6c0 .8-.2 1.500-.7 1.900" />
  </svg>
);
const Close = () => (
  <svg width="13" height="13" viewBox="0 0 13 13" stroke="#111" strokeWidth="1.100">
    <path d="M.3.300l12.400 12.400M12.700.3.300 12.700" />
  </svg>
);

const GitHub = <FaGithub size={20} color="#24292f" />;
const tabs = [
  [<WhatsApp />, "(105) W"],
  [GitHub, "PoojaSi"],
  [<N8n />, "n8n.io -"],
  [<N8nBoxed />, "Groq cr"],
  [<GroqNine>9</GroqNine>, "GroqCl"],
  [<Lovable id="lv1" />, "Lovable"],
  [<ChatGpt><SiOpenai size={15} /></ChatGpt>, "Git Inst"],
  [<GitLogo />, "Git - Do"],
  [<Gmail />, "Inbox (2"],
  [<Gmail />, "[GitHub"],
  [<N8n />, "n8n.io -"],
  [GitHub, "chirravi"],
  [<Lovable id="lv2" />, "syllabus"],
];
const bookmarks = [
  [<Gmail />, "Gmail", 85, -0.2],
  [<YouTube />, "YouTube", 107, -0.25],
  [<Maps />, "Maps", 85, -0.2],
  [<Google />, "siva art - Google Se...", 194, 0.08],
  [<SelfLearn />, "Self learning#skill s...", 189, -0.05],
  [<Sf />, "C Programming Qu...", 193, 0],
  [GitHub, "web.basics/html.md...", 192, -0.22],
  [<Acrobat />, "Adobe Acrobat", 160, 0],
];

export default function App() {
  return (
    <Screen>
      <Global />
      <TabStrip>
        <TabSearch><SmallChevron /></TabSearch>
        {tabs.map(([icon, text], i) => (
          <Tab key={i} $sep={i < tabs.length - 1}>
            <TabIcon>{icon}</TabIcon>
            <TabText>{text}</TabText>
          </Tab>
        ))}
        <ActiveTab>
          <TabIcon><HeartIcon /></TabIcon>
          <TabText $w={20} $ml={9}>syll</TabText>
          <Spacer />
          <X size={15} strokeWidth={3} color="#1f1f1f" />
        </ActiveTab>
        <Tab $sep>
          <TabIcon><N8n /></TabIcon>
          <TabText $w={50} $ls={-0.3}><PlayMark>▶</PlayMark>My w</TabText>
        </Tab>
        <NewTab><Plus size={20} strokeWidth={2.400} color="#3c4043" /></NewTab>
        <Spacer />
        <WindowControls>
          <Minimize />
          <Restore />
          <Close />
        </WindowControls>
      </TabStrip>

      <ToolbarBack>
        <Toolbar>
          <Slot $w={55}><Arrow /></Slot>
          <Slot $w={35}><Arrow flip /></Slot>
          <Slot $w={54}><Reload /></Slot>
          <Omnibox>
            <SiteInfo><Tune /></SiteInfo>
            <Url>preview--syllabus-quest-mapper.lovable.app</Url>
            <Spacer />
            <StarIcon />
          </Omnibox>
          <Slot $w={67}><Puzzle /></Slot>
          <VLine $mt={11} />
          <Slot $w={62}><Download /></Slot>
          <Slot $w={28}><Avatar>I</Avatar></Slot>
          <Slot $w={63}><Dots /></Slot>
        </Toolbar>
      </ToolbarBack>

      <Bookmarks>
        <Slot $w={18}><AppsGrid /></Slot>
        <Slot $w={40}><VLine /></Slot>
        {bookmarks.map(([icon, text, w, ls]) => (
          <Bookmark key={text} $w={w} $ls={ls}>{icon}{text}</Bookmark>
        ))}
      </Bookmarks>

      <Viewport>
        <Page>
          <Tagline>
            Transform your boring college syllabus into an epic, week-by-week study journey using AI
          </Tagline>
          <Card>
            <Title>Upload Your Syllabus</Title>
            <Subtitle>We'll transform your PDF syllabus into an interactive study roadmap</Subtitle>
            <DropZone>
              <CheckCircle><Check size={40} strokeWidth={2} /></CheckCircle>
              <FileName>Automated theory.pdf</FileName>
              <FileHint>Click to change file</FileHint>
            </DropZone>
            <Options>
              <div>
                <Label>Number of Weeks</Label>
                <SelectBox>
                  4 Weeks
                  <SmallChevron w={12} color="#1a1129" sw={2.100} />
                </SelectBox>
              </div>
              <ToggleRow>
                <Toggle />
                <Label $ls={-0.04}>Include Learning Resources</Label>
              </ToggleRow>
            </Options>
            <Generate><Fire />Generate Roadmap</Generate>
          </Card>
        </Page>
        <Scrollbar>
          <Triangle />
          <Thumb />
          <Triangle down />
        </Scrollbar>
        <Badge>
          <BadgeText>Edit with</BadgeText>
          <Lovable size={13} id="lv3" soft />
          <BadgeBrand>Lovable</BadgeBrand>
          <BadgeClose><X size={10} strokeWidth={3.500} /></BadgeClose>
        </Badge>
        <Toast><ToastIcon><ToastCheck /></ToastIcon>PDF file added successfully</Toast>
      </Viewport>

      <Taskbar>
        <Weather>
          <WeatherIcon />
          <TwoLines $mb={3}>31°C<br /><span>Haze</span></TwoLines>
        </Weather>
        <WinLogo />
        <SearchBox>
          <SearchGlass />
          <SearchLabel>Search</SearchLabel>
          <Telegraph />
        </SearchBox>
        <App55><TaskView /></App55>
        <App55><Copilot /></App55>
        <App55><Teams /></App55>
        <App55><Outlook /></App55>
        <App55 $run><Folder /></App55>
        <App55><Firefox /></App55>
        <App55><Notion /></App55>
        <App55><Edge /></App55>
        <App55 $active><Chrome /><AppBadge>I</AppBadge></App55>
        <App55 $run><Disc><FaSpotify size={29} /></Disc></App55>
        <App55 $run><PostmanDisc><SiPostman size={30} /></PostmanDisc></App55>
        <App55 $run><VsCode /></App55>
        <Tray>
          <Slot $w={48} $mr={9}><SmallChevron w={15} up sw={1.300} /></Slot>
          <TwoLines $align="center" $mb={1}>ENG<br />IN</TwoLines>
          <TrayIcons>
            <Wifi size={21} strokeWidth={1.800} />
            <Volume2 size={21} strokeWidth={1.500} />
            <Battery />
          </TrayIcons>
          <Clock><TwoLines $align="right" $size={14.8} $ls={0} $mb={3}>11:22<br />27-04-2025</TwoLines></Clock>
        </Tray>
      </Taskbar>
    </Screen>
  );
}
